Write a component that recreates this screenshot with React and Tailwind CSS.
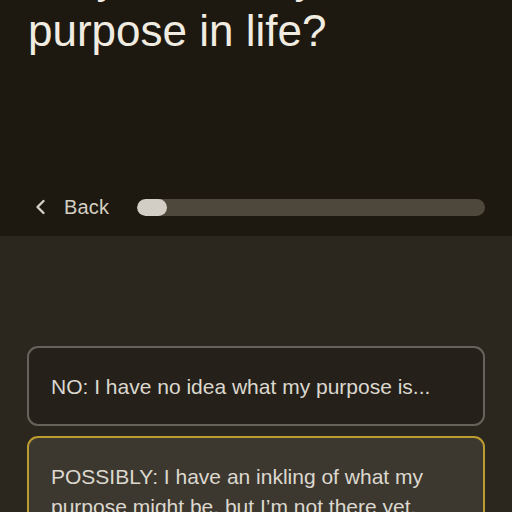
export default function App() {
  return (
    <div className="w-[512px] h-[512px] overflow-hidden flex flex-col bg-[#2b271f]" style={{ fontFamily: '"Liberation Sans", Arial, sans-serif' }}>
      <div className="h-[236px] shrink-0 bg-[#1d1910] flex flex-col overflow-hidden">
        <h1 className="mt-[-49px] px-[28px] text-[44px] leading-[53px] text-[#f1ece1] font-normal">
          Do you know your<br />purpose in life?
        </h1>
        <div className="flex-1" />
        <div className="flex items-center pl-[35px] pr-[27px] pb-[17px]">
          <svg width="11" height="16" viewBox="0 0 11 16" fill="none" className="shrink-0">
            <path d="M8.5 2 L2.5 8 L8.5 14" stroke="#d4cfc3" strokeWidth="2.4" strokeLinecap="round" strokeLinejoin="round" />
          </svg>
          <span className="ml-[18px] text-[20px] leading-[24px] text-[#d4cfc3] tracking-[0.2px]">Back</span>
          <div className="ml-[28px] flex-1 h-[17px] rounded-full bg-[#4e483c] overflow-hidden">
            <div className="h-full w-[30px] rounded-full bg-[#d2cec6]" />
          </div>
        </div>
      </div>
      <div className="flex flex-col gap-[10px] px-[27px] pt-[110px]">
        <div className="rounded-[11px] border-2 border-[#67625a] bg-[#25211a] px-[22px] pt-[24px] pb-[22px] text-[21px] leading-[30px] text-[#dcd8cf]">
          NO: I have no idea what my purpose is...
        </div>
        <div className="rounded-[11px] border-2 border-[#bb9c2f] bg-[#3c3830] px-[22px] pt-[24px] pb-[22px] text-[21px] leading-[30px] text-[#dcd8cf]">
          POSSIBLY: I have an inkling of what my purpose might be, but I’m not there yet.
        </div>
      </div>
    </div>
  );
}
